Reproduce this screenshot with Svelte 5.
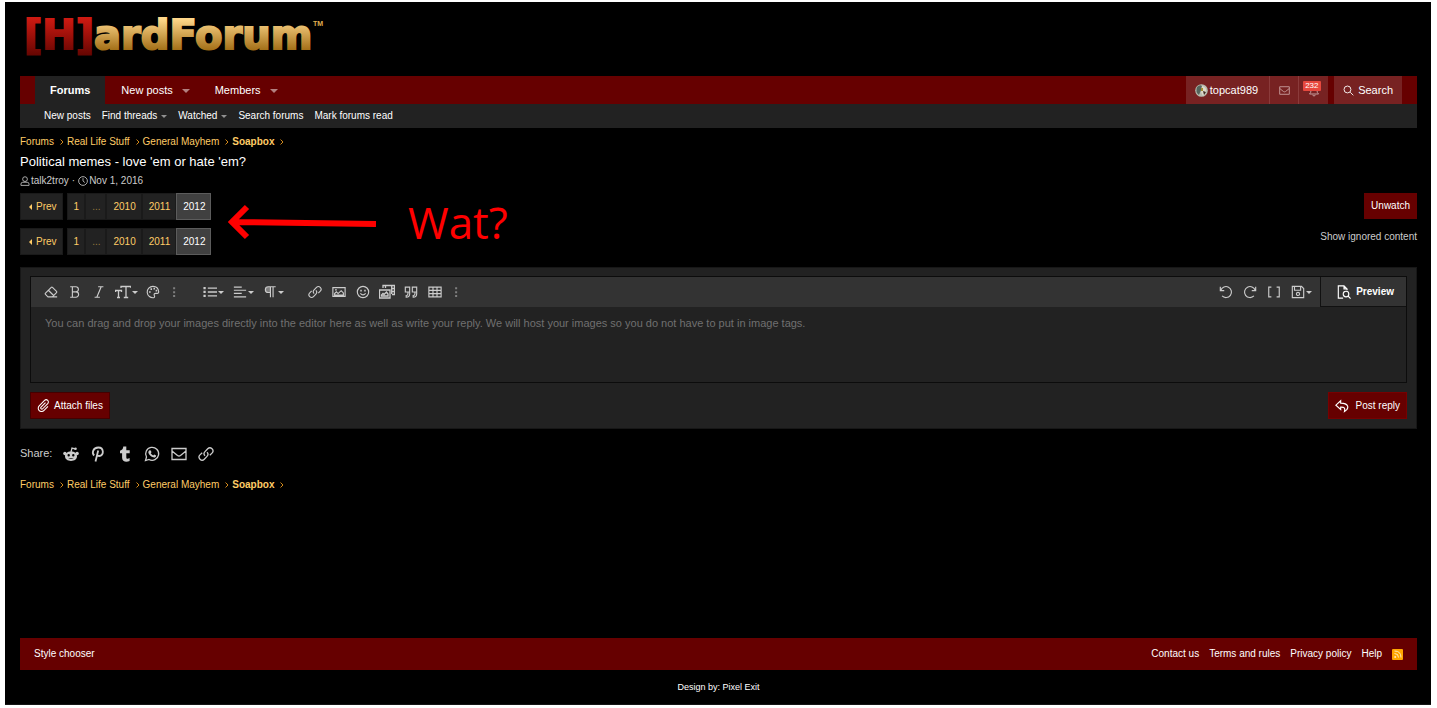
<script lang="ts">
  const crumbs = ['Forums', 'Real Life Stuff', 'General Mayhem', 'Soapbox'];

  const mainNav = [
    { label: 'Forums', active: true, menu: false },
    { label: 'New posts', active: false, menu: true },
    { label: 'Members', active: false, menu: true }
  ];

  const subNav = [
    { label: 'New posts', menu: false },
    { label: 'Find threads', menu: true },
    { label: 'Watched', menu: true },
    { label: 'Search forums', menu: false },
    { label: 'Mark forums read', menu: false }
  ];

  const pages = ['1', '...', '2010', '2011', '2012'];
  const current = '2012';

  const toolGroups = [
    [
      { icon: 'eraser', title: 'Remove formatting' },
      { icon: 'bold', title: 'Bold' },
      { icon: 'italic', title: 'Italic' },
      { icon: 'size', title: 'Font size', menu: true },
      { icon: 'palette', title: 'Text color' },
      { icon: 'dots', title: 'More text options' }
    ],
    [
      { icon: 'list', title: 'List', menu: true },
      { icon: 'align', title: 'Alignment', menu: true },
      { icon: 'paragraph', title: 'Paragraph format', menu: true }
    ],
    [
      { icon: 'link', title: 'Insert link' },
      { icon: 'image', title: 'Insert image' },
      { icon: 'smile', title: 'Smilies' },
      { icon: 'media', title: 'Media' },
      { icon: 'quote', title: 'Quote' },
      { icon: 'table', title: 'Insert table' },
      { icon: 'dots', title: 'More options' }
    ]
  ];

  const historyTools = [
    { icon: 'undo', title: 'Undo' },
    { icon: 'redo', title: 'Redo' },
    { icon: 'brackets', title: 'Toggle BB code' },
    { icon: 'save', title: 'Drafts', menu: true }
  ];

  const shares = ['reddit', 'pinterest', 'tumblr', 'whatsapp', 'mail', 'link'];
  const footerLinks = ['Contact us', 'Terms and rules', 'Privacy policy', 'Help'];

  let reply = $state('');
</script>

{#snippet icon(name: string, size: number)}
  <svg class="icon" width={size} height={size} viewBox="0 0 16 16" aria-hidden="true">
    {#if name === 'eraser'}
      <path d="M4.500 13.500 1.700 10.700q-.7-.7 0-1.400L8.300 2.700q.7-.7 1.400 0l4.600 4.600q.7.7 0 1.400l-4.800 4.800zM5 6l6 6M4.500 13.500h10.500" />
    {:else if name === 'bold'}
      <path d="M2.500 2H9a2.900 2.900 0 0 1 0 5.800H5M9 7.800a3.100 3.100 0 0 1 0 6.200H2.500M5 2v12" />
    {:else if name === 'italic'}
      <path d="M7 2h6M3 14h6M10.500 2l-5 12" />
    {:else if name === 'size'}
      <path d="M6 4V2.500h10V4M11 2.500v11M8.800 13.500h4.400M.5 8V6.500h6V8M3.500 6.500v7M2 13.500h3" />
    {:else if name === 'palette'}
      <path d="M8 1.500a6.500 6.500 0 1 0 1 12.900c1.300-.3.800-1.800.4-2.600-.5-1.200.3-2.300 1.600-2.300h2c1 0 1.600-.7 1.500-1.700C14.200 4.100 11.500 1.500 8 1.500z" />
      <path class="solid" d="M3.500 7h1.800v1.800H3.500zM5.100 3.800h1.800v1.800H5.100zM8.500 3.200h1.800V5H8.500zM11 5.500h1.800v1.800H11z" />
    {:else if name === 'dots'}
      <path class="solid dim" d="M7 2.500h2.300v2.300H7zM7 7h2.300v2.300H7zM7 11.500h2.300v2.300H7z" />
    {:else if name === 'list'}
      <path stroke-width="1.500" d="M5.500 3.500H16M5.500 8H16M5.500 12.500H16" />
      <path class="solid" d="M.5 2.300h2.600v2.500H.5zM.5 6.700h2.600v2.500H.5zM.5 11.200h2.600v2.500H.5z" />
    {:else if name === 'align'}
      <path d="M1 2.500h9M1 6h14M1 9.500h9M1 13.500h14" />
    {:else if name === 'paragraph'}
      <path d="M14.500 2H6a3.300 3.300 0 0 0 0 6.600h2.500M8.500 2v12M11.500 2v12" />
      <path class="solid dim" d="M8.500 2H6a3.300 3.300 0 0 0 0 6.600h2.500z" />
    {:else if name === 'link'}
      <path d="M7 9.800a3 3 0 0 1 0-4.200L9.700 2.800a3 3 0 0 1 4.300 4.300l-2.200 2.200M9 6.200a3 3 0 0 1 0 4.200l-2.700 2.800A3 3 0 0 1 2 8.900l2.200-2.200" />
    {:else if name === 'image'}
      <path d="M1 3h14v10H1zM3 11.500v-1.700l2-2 2 2L10.500 6.500 13 9v2.500z" /><circle class="solid" cx="4.500" cy="5.500" r="1" />
    {:else if name === 'smile'}
      <circle cx="8" cy="8" r="6.500" /><path d="M5 9.500q3 3.500 6 0" />
      <path class="solid" d="M4.900 5.500h1.700v1.800H4.900zM9.400 5.500h1.700v1.800H9.400z" />
    {:else if name === 'media'}
      <path d="M.5 6h10.500v8H.5zM2.500 12v-1l1.500-1.500 1 1 2.500-2.500 1.500 2v2zM4 4V1.500h11.500v9H13M12.700 1.500v8.500M12.700 4.500h2.800M12.700 7.500h2.800M6.500 1.500V4" />
    {:else if name === 'quote'}
      <path d="M6.500 2.500H1.500v5.500h5zM6.500 8v2q0 4-4 4v-2q2 0 2-2V8M14.500 2.500h-5v5.500h5zM14.500 8v2q0 4-4 4v-2q2 0 2-2V8" />
    {:else if name === 'table'}
      <path d="M1 2.500h14v11H1zM1 6.200h14M1 9.800h14M5.700 2.500v11M10.300 2.500v11" />
    {:else if name === 'undo'}
      <path d="M1.500 2v4.500H6M2 6A6.300 6.300 0 1 1 3.500 12.500" />
    {:else if name === 'redo'}
      <path d="M14.500 2v4.500H10M14 6A6.300 6.300 0 1 0 12.500 12.500" />
    {:else if name === 'brackets'}
      <path d="M5 2.500H2v11h3M11 2.500h3v11h-3" />
    {:else if name === 'save'}
      <path d="M1.500 1.500H12l2.500 2.500v10.500h-13zM4 1.500V6h7V1.500" /><circle cx="8" cy="10.200" r="1.800" />
    {:else if name === 'preview'}
      <path d="M7 15H1.500V1H8l3.500 3.500V6M8 1v3.500h3.500M12.600 12.600 15.500 15.500" /><circle cx="10.300" cy="10.300" r="3.200" />
    {:else if name === 'clip'}
      <path d="M10.500 4.500 5 10a1.400 1.400 0 0 0 2 2l6.200-6.300a2.700 2.700 0 0 0-3.900-3.900L2.700 8.500a4 4 0 0 0 5.700 5.700L13.500 9" />
    {:else if name === 'reply'}
      <path d="M6.500 2 1 7l5.500 5V9.300c4-.2 5.300.7 4.300 5C17 10.500 15.500 4.700 6.500 4.700z" />
    {:else if name === 'user'}
      <circle cx="8" cy="5" r="3.800" /><path d="M1.500 15v-2q0-3 3-3h7q3 0 3 3v2z" />
    {:else if name === 'clock'}
      <circle cx="8" cy="8" r="7" /><path d="M8 3.500V8l3 2.500" />
    {:else if name === 'mail'}
      <path d="M1 2.500h14v11H1zM1 5l5.500 4.500q1.500 1 3 0L15 5" />
    {:else if name === 'bell'}
      <path d="M8 1.500v1.500M2 12h12q-2-1.500-2-5a4 4 0 0 0-8 0q0 3.500-2 5zM6 13.500q2 2.500 4 0" />
    {:else if name === 'search'}
      <circle cx="6.500" cy="6.500" r="5" /><path d="m10.500 10.500 4.500 4.500" />
    {:else if name === 'reddit'}
      <path class="solid" fill-rule="evenodd" d="M8 5.500c3.700 0 6 2 6 4.800S11.500 15 8 15s-6-2-6-4.700 2.300-4.800 6-4.800zM4.500 9.200a1.200 1.200 0 1 0 2.400 0 1.200 1.200 0 0 0-2.400 0zm4.600 0a1.200 1.200 0 1 0 2.400 0 1.200 1.200 0 0 0-2.400 0zM5 11.800q3 2.500 6 0-3 1-6 0z" />
      <circle class="solid" cx="1.900" cy="7.500" r="1.700" /><circle class="solid" cx="14.100" cy="7.500" r="1.700" />
      <circle class="solid" cx="12.500" cy="2.800" r="1.300" /><path d="M8 6l1-4 3 .8" />
    {:else if name === 'pinterest'}
      <path stroke-width="1.800" d="M4.200 9.500C1.500 7 3 1.500 8.300 1.500c6 0 5.800 8.500.9 8.500-1.200 0-1.900-.6-2.100-1.300M8.200 4.500 5.500 15.500" />
    {:else if name === 'tumblr'}
      <path class="solid" d="M6.300.5h3v3.700h3.400v3H9.300v4c0 1.900 1.500 1.800 3.300.9V15c-3.500 1.500-7.500.6-7.500-3.300V7.200H3V4.700C5.200 4 6.100 2.700 6.300.5z" />
    {:else if name === 'whatsapp'}
      <path stroke-width="1.300" d="M1.500 14.500l1-3.500a6.500 6.500 0 1 1 2.500 2.500z" />
      <path class="solid" d="M5.500 4.300l1.300.2.700 1.800-.8 1q.9 1.500 2.500 2.200l1-1.100 1.900 1c.1 1.700-1.600 2.400-3 1.900C6.500 10.500 4.800 8.500 4.300 6.500q0-1.500 1.200-2.200z" />
    {/if}
  </svg>
{/snippet}

{#snippet breadcrumb()}
  <nav class="breadcrumb" aria-label="Breadcrumb">
    {#each crumbs as crumb, i}
      <a href="#top" class:last={i === crumbs.length - 1}>{crumb}</a>
      <svg class="chevron" width="4" height="6" viewBox="0 0 4 6" aria-hidden="true"><path d="M.5.5 3 3 .5 5.500" /></svg>
    {/each}
  </nav>
{/snippet}

{#snippet pagination()}
  <nav class="pagination" aria-label="Pages">
    <a class="prev" href="#top"><i></i>Prev</a>
    <div class="page-list">
      {#each pages as page}
        <a href="#top" class:current={page === current} class:skip={page === '...'}>{page}</a>
      {/each}
    </div>
  </nav>
{/snippet}

{#snippet tool(item: { icon: string; title: string; menu?: boolean })}
  <button
    type="button"
    class="tool"
    class:wide={item.menu}
    class:narrow={item.icon === 'dots'}
    title={item.title}
    aria-label={item.title}
  >
    {@render icon(item.icon, item.icon === 'size' || item.icon === 'media' ? 16 : 14)}
    {#if item.menu}<i class="caret light"></i>{/if}
  </button>
{/snippet}

<div class="page" id="top">
  <header>
    <a class="logo" href="#top">
      <svg width="310" height="60" viewBox="0 0 310 60">
        <defs>
          <linearGradient id="red" gradientUnits="userSpaceOnUse" x1="0" y1="16" x2="0" y2="56">
            <stop offset="0" stop-color="#cf1a12" />
            <stop offset="1" stop-color="#5e0400" />
          </linearGradient>
          <linearGradient id="gold" gradientUnits="userSpaceOnUse" x1="0" y1="17" x2="0" y2="49">
            <stop offset="0" stop-color="#ffd78a" />
            <stop offset="1" stop-color="#a06c14" />
          </linearGradient>
        </defs>
        <text x="4" y="47"><tspan fill="url(#red)" stroke="url(#red)">[H]</tspan><tspan fill="url(#gold)" stroke="url(#gold)">ardForum</tspan></text>
        <text class="tm" x="293" y="24" fill="#e0b050">TM</text>
      </svg>
    </a>
  </header>

  <nav class="main-nav" aria-label="Main">
    <div class="tabs">
      {#each mainNav as item}
        <a href="#top" class:active={item.active}>
          {item.label}{#if item.menu}<i class="caret"></i>{/if}
        </a>
      {/each}
    </div>
    <div class="account">
      <a class="user" href="#top">
        <svg width="13" height="13" viewBox="0 0 13 13" aria-hidden="true">
          <circle cx="6.500" cy="6.500" r="6.300" fill="#b9bdb0" />
          <path d="M2 3q3-3 5-1l-1 4-2 5Q0 8 2 3z" fill="#55655d" />
          <path d="M7 2q5 1 4 6L8 12 6 8z" fill="#ded9c9" />
          <path d="M6 4h2v3H6z" fill="#a18b2d" /><path d="M8 7l3 1-2 3z" fill="#3d2b22" />
        </svg>
        topcat989
      </a>
      <a class="square" href="#top" aria-label="Conversations">{@render icon('mail', 11)}</a>
      <a class="square alerts" href="#top" aria-label="Alerts">
        {@render icon('bell', 12)}
        <span class="badge">232</span>
      </a>
    </div>
    <a class="search" href="#top">{@render icon('search', 11)}Search</a>
  </nav>

  <nav class="sub-nav" aria-label="Forums">
    {#each subNav as item}
      <a href="#top">{item.label}{#if item.menu}<i class="caret"></i>{/if}</a>
    {/each}
  </nav>

  {@render breadcrumb()}

  <h1>Political memes - love 'em or hate 'em?</h1>
  <div class="meta">
    {@render icon('user', 10)}<a href="#top">talk2troy</a>
    <span class="dot">·</span>
    {@render icon('clock', 10)}<time datetime="2016-11-01">Nov 1, 2016</time>
  </div>

  <div class="page-rows">
    <div class="row">
      {@render pagination()}
      <button type="button" class="primary">Unwatch</button>
    </div>
    <div class="row">
      {@render pagination()}
      <a class="ignored" href="#top">Show ignored content</a>
    </div>
    <div class="note">
      <svg width="149" height="36" viewBox="0 0 149 36" aria-hidden="true">
        <path d="M148 20 4 18M19 3 4 18 19 33" fill="none" stroke="#f00" stroke-width="6" />
      </svg>
      <span>Wat?</span>
    </div>
  </div>

  <form class="reply" onsubmit={(e) => e.preventDefault()}>
    <div class="editor">
      <div class="toolbar">
        {#each toolGroups as group}
          <div class="group">
            {#each group as item}{@render tool(item)}{/each}
          </div>
        {/each}
        <div class="group right">
          {#each historyTools as item}{@render tool(item)}{/each}
        </div>
        <button type="button" class="preview">{@render icon('preview', 14)}Preview</button>
      </div>
      <textarea
        bind:value={reply}
        aria-label="Reply"
        placeholder="You can drag and drop your images directly into the editor here as well as write your reply. We will host your images so you do not have to put in image tags."
      ></textarea>
    </div>
    <div class="actions">
      <button type="button" class="primary attach">{@render icon('clip', 13)}Attach files</button>
      <button type="submit" class="primary post">{@render icon('reply', 14)}Post reply</button>
    </div>
  </form>

  <div class="share">
    <span>Share:</span>
    {#each shares as name}
      <a href="#top" aria-label={name}>{@render icon(name, 16)}</a>
    {/each}
  </div>

  {@render breadcrumb()}

  <footer>
    <div class="footer-bar">
      <a href="#top">Style chooser</a>
      <div class="footer-links">
        {#each footerLinks as label}<a href="#top">{label}</a>{/each}
        <a class="rss" href="#top" aria-label="RSS">
          <svg width="11" height="11" viewBox="0 0 11 11" aria-hidden="true">
            <path d="M2.500 2q6.500 0 6.500 6.500M2.500 4.500q4 0 4 4" fill="none" stroke="#ffe9b8" />
            <circle cx="3.200" cy="8" r="1" fill="#ffe9b8" />
          </svg>
        </a>
      </div>
    </div>
    <p>Design by: <a href="#top">Pixel Exit</a></p>
  </footer>
</div>

<style>
  :global(body) {
    background: #fff;
  }

  .page {
    box-sizing: border-box;
    display: flex;
    flex-direction: column;
    min-height: calc(100vh - 5px);
    margin: 2px 6px 3px 5px;
    padding: 0 14px 0 15px;
    background: #000;
    border-bottom: 1px solid #151515;
    color: #ccc;
    font: 10px/14px "Liberation Sans", Arial, sans-serif;
  }

  a {
    color: inherit;
    text-decoration: none;
  }

  button {
    padding: 0;
    border: 0;
    background: none;
    color: inherit;
    font: inherit;
    cursor: pointer;
  }

  .icon {
    flex: none;
    display: block;
    fill: none;
    stroke: currentColor;
    stroke-width: 1.3;
  }

  .icon .solid {
    fill: currentColor;
    stroke: none;
  }

  .icon .dim {
    opacity: 0.5;
  }

  .caret {
    display: inline-block;
    margin-left: 9px;
    border: 4px solid transparent;
    border-top-color: currentColor;
    border-bottom: 0;
    opacity: 0.5;
    vertical-align: 1px;
  }

  .caret.light {
    margin-left: 1px;
    border-width: 3px;
    border-bottom: 0;
    opacity: 1;
  }

  header {
    display: flex;
    height: 74px;
  }

  .logo text {
    font: bold 40px "DejaVu Sans", Verdana, sans-serif;
    stroke-width: 2px;
  }

  .logo .tm {
    font: bold 7px "Liberation Sans", Arial, sans-serif;
    stroke: none;
  }

  .main-nav {
    display: flex;
    height: 28px;
    padding: 0 15px;
    background: #600;
    color: #fff;
    font-size: 11px;
    line-height: 28px;
  }

  .tabs {
    display: flex;
    gap: 1px;
    margin-right: auto;
  }

  .tabs a {
    padding: 0 9px 0 15px;
  }

  .tabs .active {
    padding: 0 15px;
    background: #222;
    font-weight: bold;
  }

  .account {
    display: flex;
    margin-right: 6px;
  }

  .account a,
  .search {
    display: flex;
    align-items: center;
    background: #772222;
  }

  .user {
    gap: 2px;
    padding: 0 11px 0 9px;
  }

  .account .square {
    position: relative;
    justify-content: center;
    width: 28px;
    border-left: 1px solid #8b3b3b;
    color: #c9a0a0;
  }

  .account .alerts {
    align-items: flex-end;
    padding-bottom: 7px;
    box-sizing: border-box;
    width: 30px;
  }

  .badge {
    position: absolute;
    top: 5px;
    left: 4px;
    padding: 0 2px;
    border-radius: 1px;
    background: #e8483e;
    color: #fff;
    font-size: 8px;
    line-height: 10px;
  }

  .search {
    gap: 4px;
    padding: 0 9px;
  }

  .sub-nav {
    display: flex;
    gap: 11px;
    height: 24px;
    padding: 0 24px;
    background: #222;
    color: #fff;
    line-height: 24px;
  }

  .sub-nav .caret {
    margin-left: 4px;
    border-width: 3px;
    border-bottom: 0;
  }

  .breadcrumb {
    display: flex;
    align-items: center;
    padding: 7px 0 6px;
    color: #fc6;
  }

  .breadcrumb a {
    margin-right: 6px;
  }

  .breadcrumb .last {
    font-weight: bold;
  }

  .chevron {
    margin-right: 3px;
    fill: none;
    stroke: #d48a1a;
  }

  h1 {
    margin: 0;
    color: #fff;
    font-size: 13px;
    font-weight: normal;
    line-height: 14px;
  }

  .meta {
    display: flex;
    align-items: center;
    gap: 1px;
    margin: 5px 0;
  }

  .dot {
    margin: 0 2px;
  }

  .page-rows {
    position: relative;
    display: flex;
    flex-direction: column;
    gap: 8px;
  }

  .row {
    display: flex;
    justify-content: space-between;
    align-items: flex-start;
  }

  .pagination {
    display: flex;
    gap: 4px;
    color: #fc6;
    line-height: 25px;
  }

  .pagination a {
    border: 1px solid #1a1a1a;
    background: #222;
  }

  .prev {
    display: flex;
    align-items: center;
    padding: 0 5px 0 8px;
  }

  .prev i {
    margin-right: 4px;
    border: 3px solid transparent;
    border-right-color: currentColor;
    border-left: 0;
  }

  .page-list {
    display: flex;
  }

  .page-list a {
    padding: 0 5px 0 6px;
  }

  .page-list .skip {
    color: #997a3d;
  }

  .page-list .current {
    border-color: #5c5c5c;
    background: #404040;
    color: #fff;
  }

  .primary {
    background: #600;
    color: #fff;
    line-height: 26px;
  }

  .row .primary {
    padding: 0 7px;
  }

  .ignored {
    line-height: 17px;
  }

  .note {
    position: absolute;
    top: 0;
    left: 208px;
    display: flex;
    align-items: center;
    gap: 31px;
    color: #f00;
    font: 44px/58px "Open Sans", "Noto Sans", sans-serif;
  }

  .reply {
    margin-top: 12px;
    padding: 8px 9px 9px;
    border: 1px solid #171717;
    background: #222;
  }

  .editor {
    border: 1px solid #0c0c0c;
  }

  .toolbar {
    display: flex;
    align-items: center;
    height: 30px;
    padding-left: 8px;
    background: #333;
    color: #ccc;
  }

  .group {
    display: flex;
    margin-right: 15px;
  }

  .group.right {
    margin: 0 4px 0 auto;
  }

  .tool {
    display: flex;
    align-items: center;
    justify-content: center;
    width: 24px;
    height: 24px;
  }

  .tool.wide {
    width: 30px;
  }

  .tool.narrow {
    width: 18px;
  }

  .preview {
    display: flex;
    align-items: center;
    gap: 5px;
    height: 30px;
    padding: 0 12px 0 16px;
    border-left: 1px solid #111;
    border-bottom: 1px solid #111;
    color: #fff;
    font-weight: bold;
  }

  textarea {
    box-sizing: border-box;
    display: block;
    width: 100%;
    height: 75px;
    padding: 9px 14px;
    border: 0;
    outline: 0;
    resize: none;
    background: none;
    color: #ccc;
    font: 11px/14px "Liberation Sans", Arial, sans-serif;
  }

  textarea::placeholder {
    color: #707070;
  }

  .actions {
    display: flex;
    justify-content: space-between;
    margin-top: 9px;
  }

  .actions .primary {
    display: flex;
    align-items: center;
    gap: 4px;
    padding: 0 6px;
    border: 1px solid #400;
    line-height: 25px;
  }

  .actions .post {
    gap: 7px;
    border-color: #700;
  }

  .share {
    display: flex;
    align-items: center;
    gap: 11px;
    margin: 16px 0 9px;
    font-size: 11px;
    line-height: 17px;
  }

  footer {
    margin-top: auto;
    color: #fff;
  }

  .footer-bar {
    display: flex;
    justify-content: space-between;
    padding: 9px 14px;
    background: #600;
  }

  .footer-links {
    display: flex;
    align-items: center;
    gap: 10px;
  }

  .rss svg {
    display: block;
    border-radius: 1px;
    background: #ffa500;
  }

  footer p {
    margin: 0;
    padding: 10px 0;
    font-size: 9px;
    text-align: center;
  }
</style>
